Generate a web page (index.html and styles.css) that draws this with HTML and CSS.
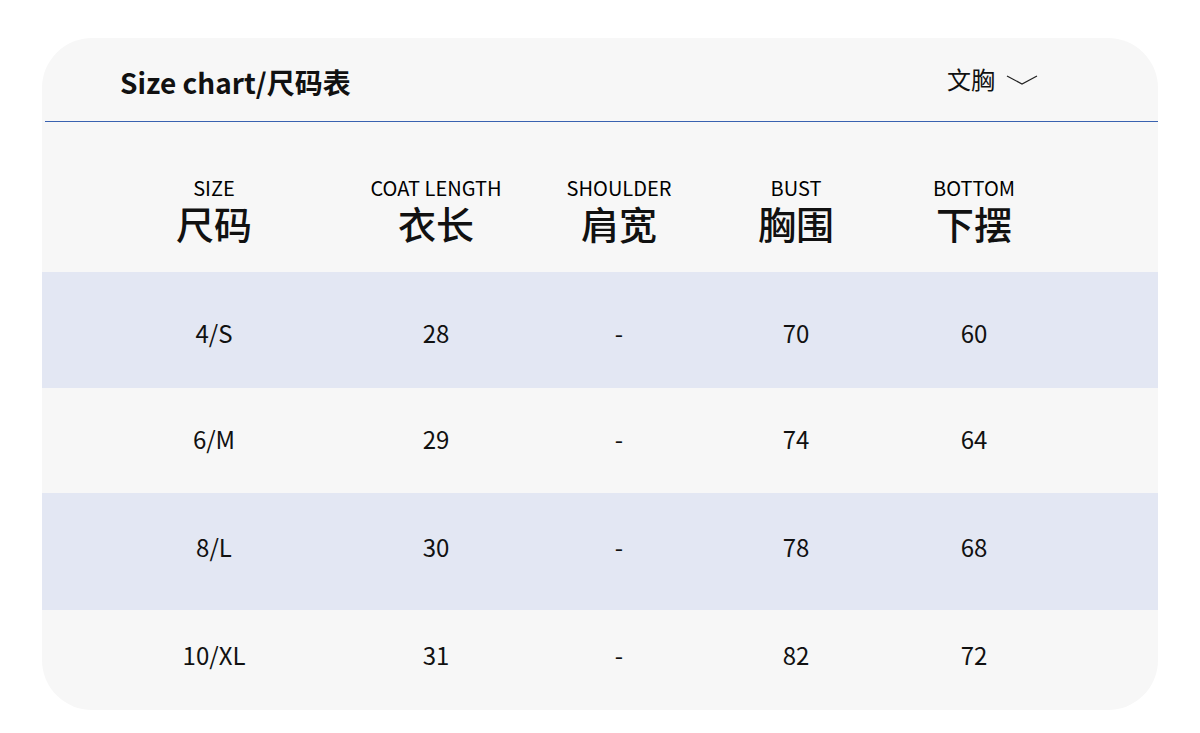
FILE: index.html
```html
<!DOCTYPE html>
<html lang="zh">
<head>
<meta charset="utf-8">
<title>Size chart</title>
<link rel="stylesheet" href="styles.css">
</head>
<body>
<div class="card">
  <div class="topbar">
    <div class="title">Size chart/尺码表</div>
    <div class="select">文胸
      <svg class="chev" width="32" height="14" viewBox="0 0 32 14"><path d="M1 3 L16 11 L31 3" fill="none" stroke="#222" stroke-width="1.2"/></svg>
    </div>
  </div>
  <div class="row head">
    <div class="cell"><span class="en">SIZE</span><span class="zh">尺码</span></div>
    <div class="cell"><span class="en">COAT LENGTH</span><span class="zh">衣长</span></div>
    <div class="cell"><span class="en">SHOULDER</span><span class="zh">肩宽</span></div>
    <div class="cell"><span class="en">BUST</span><span class="zh">胸围</span></div>
    <div class="cell"><span class="en">BOTTOM</span><span class="zh">下摆</span></div>
  </div>
  <div class="row data alt r1">
    <div class="cell">4/S</div><div class="cell">28</div><div class="cell">-</div><div class="cell">70</div><div class="cell">60</div>
  </div>
  <div class="row data r2">
    <div class="cell">6/M</div><div class="cell">29</div><div class="cell">-</div><div class="cell">74</div><div class="cell">64</div>
  </div>
  <div class="row data alt r3">
    <div class="cell">8/L</div><div class="cell">30</div><div class="cell">-</div><div class="cell">78</div><div class="cell">68</div>
  </div>
  <div class="row data r4">
    <div class="cell">10/XL</div><div class="cell">31</div><div class="cell">-</div><div class="cell">82</div><div class="cell">72</div>
  </div>
</div>
</body>
</html>
```

FILE: styles.css
```css
html, body {
  margin: 0;
  padding: 0;
  background: #ffffff;
}
body {
  font-family: "Noto Sans CJK SC", "Noto Sans", sans-serif;
  color: #111;
}
.card {
  margin: 38px 0 0 42px;
  width: 1116px;
  height: 672px;
  background: #f7f7f7;
  border-radius: 50px;
  overflow: hidden;
  display: flex;
  flex-direction: column;
}
.topbar {
  height: 83px;
  flex: none;
  display: flex;
  align-items: center;
  justify-content: space-between;
  margin-left: 3px;
  padding: 0 120px 0 75px;
  border-bottom: 1px solid #3a62b0;
}
.title {
  font-size: 28px;
  font-weight: 700;
  margin-top: 4px;
}
.select {
  font-size: 24px;
  display: flex;
  align-items: center;
  gap: 11px;
  margin-top: -2px;
}
.chev {
  display: block;
  margin-top: 2px;
}
.row {
  display: grid;
  grid-template-columns: 222px 222px 144px 210px 146px;
  padding-left: 61px;
  flex: none;
}
.cell {
  display: flex;
  flex-direction: column;
  align-items: center;
  justify-content: center;
  text-align: center;
}
.head {
  height: 150px;
}
.head .cell {
  padding-top: 30px;
}
.en {
  font-size: 20px;
  line-height: 22px;
  font-weight: 400;
  color: #000;
}
.zh {
  font-size: 38px;
  line-height: 48px;
  font-weight: 500;
}
.data {
  font-size: 24px;
}
.r1 .cell { padding-top: 4px; }
.r2 .cell { padding-bottom: 4px; }
.r3 .cell { padding-bottom: 10px; }
.r4 .cell { padding-bottom: 12px; }
.alt {
  background: #e3e7f3;
}
.r1 { height: 116px; }
.r2 { height: 105px; }
.r3 { height: 117px; }
.r4 { flex: 1; }
```
